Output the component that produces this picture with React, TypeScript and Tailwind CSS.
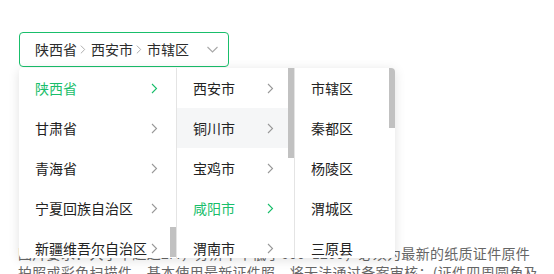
import React from "react";

const provinces = ["陕西省", "甘肃省", "青海省", "宁夏回族自治区", "新疆维吾尔自治区"];
const cities = ["西安市", "铜川市", "宝鸡市", "咸阳市", "渭南市"];
const districts = ["市辖区", "秦都区", "杨陵区", "渭城区", "三原县"];

function Chevron({ className }: { className?: string }) {
  return (
    <svg width="7" height="11" viewBox="0 0 7 11" fill="none" className={className}>
      <path d="M1 1l4.5 4.5L1 10" stroke="currentColor" strokeWidth="1.1" />
    </svg>
  );
}

export default function App() {
  const font = { fontFamily: '"Noto Sans CJK SC", "Noto Sans", sans-serif' };

  return (
    <div className="relative w-[554px] h-[274px] overflow-hidden bg-white" style={font}>
      <div className="pt-8 pl-[19px]">
        {/* select */}
        <div className="flex items-center w-[210px] h-[35px] border border-[#19be6b] rounded-[4px] pl-[15px] pr-[10px] text-[14px] text-[#2b2b2b]">
          <span>陕西省</span>
          <Chevron className="text-[#aaa] ml-[3px] mr-[5px] w-[6px]" />
          <span>西安市</span>
          <Chevron className="text-[#aaa] ml-[3px] mr-[5px] w-[6px]" />
          <span>市辖区</span>
          <svg width="11" height="7" viewBox="0 0 11 7" fill="none" className="ml-auto text-[#a8a8a8]">
            <path d="M0.5 1l5 5 5-5" stroke="currentColor" strokeWidth="1.1" />
          </svg>
        </div>
      </div>

      {/* text behind the dropdown */}
      <div className="pl-[18px] pt-[177px] text-[14px] leading-[19px] tracking-[0.3px] text-[#666] whitespace-nowrap">
        <p>图片要求：大小不超过2M，分辨率不低于600*1200，必须为最新的纸质证件原件</p>
        <p>拍照或彩色扫描件，基本使用最新证件照，将无法通过备案审核；(证件四周圆角及</p>
      </div>

      {/* cascader dropdown */}
      <div className="absolute left-[19px] top-[68px] flex h-[190px] bg-white rounded-[4px] overflow-hidden shadow-[0_2px_12px_rgba(0,0,0,0.12)] text-[14px] text-[#222]">
        <div className="relative w-[158px] border-r border-[#e4e4e4]">
          {provinces.map((p, i) => (
            <div key={p} className={"flex items-center h-10 pl-4 pr-[18px] " + (i === 0 ? "text-[#19be6b]" : "")}>
              <span>{p}</span>
              <Chevron className={"ml-auto " + (i === 0 ? "text-[#19be6b]" : "text-[#999]")} />
            </div>
          ))}
          <div className="absolute right-0 top-[159px] w-[6px] h-[30px] bg-[#c1c1c1]" />
        </div>
        <div className="relative w-[118px] border-r border-[#e4e4e4]">
          {cities.map((c, i) => (
            <div
              key={c}
              className={
                "flex items-center h-10 pl-4 pr-[20px] " +
                (i === 1 ? "bg-[#f5f6f7] " : "") +
                (i === 3 ? "text-[#19be6b]" : "")
              }
            >
              <span>{c}</span>
              <Chevron className={"ml-auto " + (i === 3 ? "text-[#19be6b]" : "text-[#999]")} />
            </div>
          ))}
          <div className="absolute right-0 top-0 w-[6px] h-[90px] bg-[#c1c1c1]" />
        </div>
        <div className="relative w-[100px]">
          {districts.map((d) => (
            <div key={d} className="flex items-center h-10 pl-4">
              <span>{d}</span>
            </div>
          ))}
          <div className="absolute right-0 top-0 w-[6px] h-[60px] bg-[#c1c1c1]" />
        </div>
      </div>
    </div>
  );
}
